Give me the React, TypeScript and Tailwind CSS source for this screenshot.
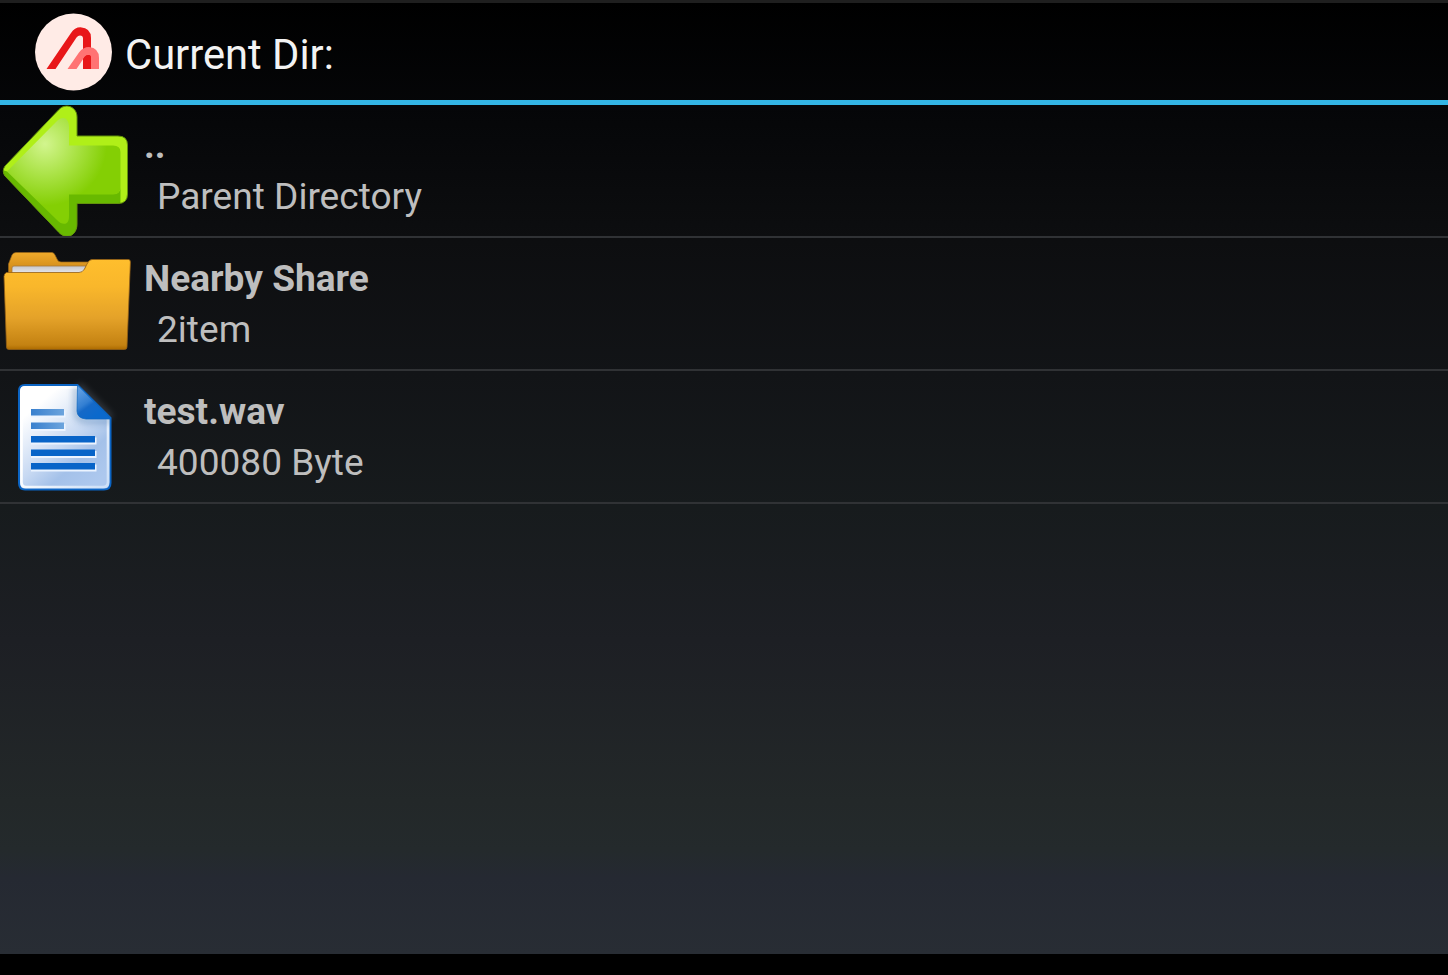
import React from "react";

function AppLogo() {
  return (
    <svg className="block h-[78px] w-[78px] shrink-0" viewBox="-0.5 0 78 78">
      <circle cx="39" cy="39" r="38.5" fill="#ffebe6" />
      <path
        d="M12 56 L36.5 20 Q40 14.3 46 14.3 Q56.5 15 56.5 25 V56 H48.5 V25.5 Q48.5 22.5 45.5 22.5 Q43.5 22.5 42 24.5 L21 56 Z"
        fill="#e81719"
      />
      <path
        d="M33 56 L44.5 39.5 Q48.5 34 54.5 34 Q64.5 35 64.5 45 V56 H56.5 V44.5 Q56.5 42 54 42 Q51.5 42 50 44 L42 56 Z"
        fill="#ff7373"
      />
      <path d="M48.5 46.3 L50 44 Q51.5 42 54 42 Q56.5 42 56.5 44.5 V56 H48.5 Z" fill="#e81719" />
    </svg>
  );
}

function BackArrow() {
  return (
    <svg className="block h-[131px] w-[131px]" viewBox="0 0 131 131">
      <defs>
        <radialGradient id="arrowFace" gradientUnits="userSpaceOnUse" cx="45" cy="39" r="65">
          <stop offset="0" stopColor="#d2f58e" />
          <stop offset="0.5" stopColor="#a9e244" />
          <stop offset="0.95" stopColor="#84cf04" />
        </radialGradient>
        <clipPath id="arrowOutline">
          <path d="M5 61 L59 4.5 C66 -2.500 77 2 77 12 V31 H118 Q127.500 31 127.500 40 V89 Q127.500 98.500 118 98.500 H77 V119 C77 131 66 135 59 127.500 L5 71 Q1.500 66 5 61 Z" />
        </clipPath>
      </defs>
      <g clipPath="url(#arrowOutline)">
        <rect width="131" height="131" fill="#b0ef18" />
        <path d="M0 64.500 L9 67 L60 110 L69 89 H113 Q120.500 89 120.500 82 V95 L118 131 H0 Z" fill="#68b900" />
      </g>
      <path
        d="M5 61 L59 4.500 C66 -2.500 77 2 77 12 V31 H118 Q127.500 31 127.500 40 V89 Q127.500 98.500 118 98.500 H77 V119 C77 131 66 135 59 127.500 L5 71 Q1.500 66 5 61 Z"
        fill="none"
        stroke="#62920b"
        strokeWidth="1"
      />
      <path
        d="M7 66.500 L58 15 Q62 12 65.500 13.500 Q69 16 69 22 V40.500 H113 Q120.500 40.500 120.500 47 V82 Q120.500 89.500 113 89.500 H69 V111 Q69 117 66 118.500 Q62 120 57 115 Z"
        fill="url(#arrowFace)"
      />
    </svg>
  );
}

function FolderIcon() {
  return (
    <svg className="block h-[131px] w-[131px]" viewBox="0 0 131 131">
      <defs>
        <linearGradient id="folderFront" x1="0" y1="0" x2="0" y2="1">
          <stop offset="0" stopColor="#ffbe2d" />
          <stop offset="0.3" stopColor="#f9b72b" />
          <stop offset="0.65" stopColor="#e4a229" />
          <stop offset="0.95" stopColor="#c48212" />
          <stop offset="1" stopColor="#ad6b00" />
        </linearGradient>
        <linearGradient id="folderBack" x1="0" y1="0" x2="0" y2="1">
          <stop offset="0" stopColor="#efaa2b" />
          <stop offset="1" stopColor="#c37c10" />
        </linearGradient>
        <linearGradient id="folderPaper" x1="0" y1="0" x2="0" y2="1">
          <stop offset="0" stopColor="#c5c6ca" />
          <stop offset="1" stopColor="#f0f0f4" />
        </linearGradient>
      </defs>
      <path
        d="M8.500 38 V26 L12 17 Q13 14.500 16 14.500 H52 Q54 14.500 55 17 L57 21 Q58 24 61 24 H90 V40 H8.500 Z"
        fill="url(#folderBack)"
        stroke="#98651a"
        strokeWidth="0.7"
      />
      <path d="M12 37 V30 Q12 28 14 28 H86 L83 36 H12 Z" fill="url(#folderPaper)" stroke="#a97a38" strokeWidth="0.8" />
      <path
        d="M6.500 34.500 H79 Q82.500 34.500 84.500 31 L87 26 Q89 21.500 92 21.500 H128.500 Q130.500 21.500 130.400 24 L127 109 Q127 111.500 124.500 111.500 H9 Q6.500 111.500 6.500 109 L4 38.500 Q4 35.500 6.500 34.500 Z"
        fill="url(#folderFront)"
        stroke="#946015"
        strokeWidth="0.8"
      />
    </svg>
  );
}

function DocumentIcon() {
  const rows = [
    { y: 38, width: 33, fill: "url(#docLine)" },
    { y: 51.5, width: 33, fill: "url(#docLine)" },
    { y: 65, width: 64, fill: "#0864c8" },
    { y: 78.5, width: 64, fill: "#0864c8" },
    { y: 92, width: 64, fill: "#0864c8" },
  ];
  return (
    <svg className="block h-[131px] w-[131px]" viewBox="0 0 131 131">
      <defs>
        <linearGradient id="docPaper" x1="0" y1="0" x2="0.75" y2="1">
          <stop offset="0.22" stopColor="#ffffff" />
          <stop offset="0.6" stopColor="#c6d8f2" />
          <stop offset="0.78" stopColor="#a4c1e9" />
          <stop offset="1" stopColor="#adc8ee" />
        </linearGradient>
        <linearGradient id="docInset" x1="0" y1="0" x2="1" y2="1">
          <stop offset="0.4" stopColor="#ffffff" />
          <stop offset="1" stopColor="#ccdff7" />
        </linearGradient>
        <linearGradient id="docLine" x1="0" y1="0" x2="1" y2="0">
          <stop offset="0" stopColor="#3980ce" />
          <stop offset="1" stopColor="#6ca4dd" />
        </linearGradient>
        <linearGradient id="docFold" x1="0.2" y1="0.1" x2="0.7" y2="0.8">
          <stop offset="0" stopColor="#5b9be0" />
          <stop offset="0.45" stopColor="#337fd2" />
          <stop offset="0.6" stopColor="#1669c7" />
          <stop offset="1" stopColor="#0b69cc" />
        </linearGradient>
        <filter id="docShade" x="-50%" y="-50%" width="200%" height="200%">
          <feGaussianBlur stdDeviation="3" />
        </filter>
        <clipPath id="docClip">
          <path d="M25 15 H77 L110 48 V112 Q110 118 104 118 H25 Q19 118 19 112 V21 Q19 15 25 15 Z" />
        </clipPath>
      </defs>
      <path d="M78 14 L111 47" stroke="#7b8796" strokeWidth="7" opacity="0.3" filter="url(#docShade)" />
      <path
        d="M25 14 H77.500 L110.500 47 V112 Q110.500 118.500 104 118.500 H25 Q19 118.500 19 112 V20 Q19 14 25 14 Z"
        fill="url(#docPaper)"
        stroke="#0b64c3"
        strokeWidth="2"
      />
      <path
        d="M25 16.500 H77 L108 48 V111 Q108 116 103 116 H26 Q21.500 116 21.500 111 V20 Q21.500 16.500 25 16.500 Z"
        fill="none"
        stroke="url(#docInset)"
        strokeWidth="2.6"
      />
      <path d="M76 15 V41 Q77 49 86 50 H112" fill="none" stroke="#376b9f" strokeWidth="5" opacity="0.4" filter="url(#docShade)" clipPath="url(#docClip)" />
      <path d="M77.500 14 L111 48 H86 Q77 47 77 40 Z" fill="url(#docFold)" stroke="#0c65bf" strokeWidth="0.7" />
      {rows.map((row) => (
        <g key={row.y}>
          <rect x="31" y={row.y + 1.5} width={row.width + 1.5} height="7" fill="#ecf4ff" />
          <rect x="31" y={row.y} width={row.width} height="6.500" fill={row.fill} />
        </g>
      ))}
    </svg>
  );
}

interface Entry {
  name: string;
  detail: string;
  icon: React.ReactNode;
}

const entries: Entry[] = [
  { name: "..", detail: "Parent Directory", icon: <BackArrow /> },
  { name: "Nearby Share", detail: "2item", icon: <FolderIcon /> },
  { name: "test.wav", detail: "400080 Byte", icon: <DocumentIcon /> },
];

export default function App() {
  return (
    <div className="flex h-[975px] w-[1448px] flex-col overflow-hidden bg-black font-[Roboto,sans-serif]">
      <div className="h-[3px] shrink-0 bg-[#1f1f1f]" />
      <div className="flex h-[951px] flex-col bg-[linear-gradient(to_bottom,#000000_0%,#050608_11%,#0d0e10_25%,#121417_39%,#171b1d_53%,#1d1f24_67%,#232829_84%,#242a2c_89%,#252932_92%,#282d34_100%)]">
        <header className="flex h-[102px] shrink-0 items-center border-b-[5px] border-[#33b5e5] pl-[34px]">
          <AppLogo />
          <h1 className="pt-1.5 pl-[13px] text-[41.7px] leading-[50px] font-normal whitespace-nowrap text-[#f3f3f3]">Current Dir:</h1>
        </header>
        <ul>
          {entries.map((entry) => (
            <li key={entry.name} className="flex h-[133px] border-b-2 border-[#303235] text-[#bebebe]">
              <div className="w-36 shrink-0">{entry.icon}</div>
              <div className="pt-[15px] text-[37.1px] leading-[51px] whitespace-nowrap">
                <div className="font-bold">{entry.name}</div>
                <div className="pl-[13px]">{entry.detail}</div>
              </div>
            </li>
          ))}
        </ul>
      </div>
    </div>
  );
}
